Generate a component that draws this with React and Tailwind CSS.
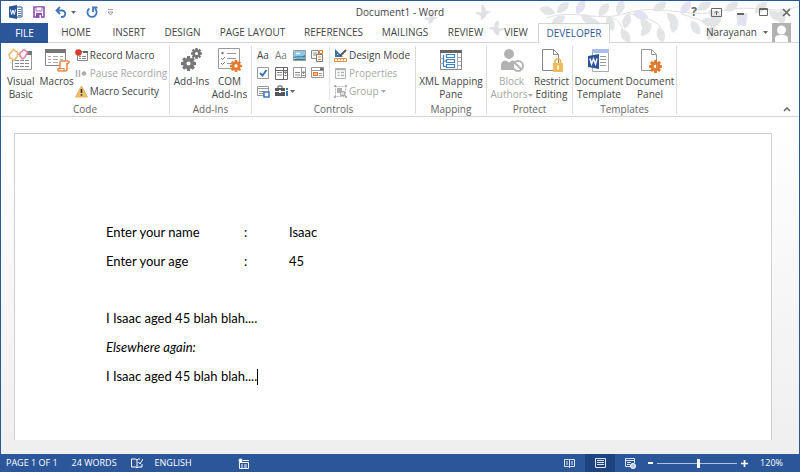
import React, { useState } from "react";

const Svg = ({ w, h, children, className = "" }) => (
  <svg width={w} height={h} viewBox={`0 0 ${w} ${h}`} fill="none" className={`shrink-0 ${className}`} aria-hidden="true">
    {children}
  </svg>
);

const Caret = ({ color = "#666" }) => (
  <Svg w={5} h={3} className="inline-block align-middle">
    <path d="M0 0h5L2.5 3z" fill={color} />
  </Svg>
);

const toothAngles = [0, 45, 90, 135, 180, 225, 270, 315];

const Gear = ({ x = 0, y = 0, size, color }) => (
  <g transform={`translate(${x} ${y}) scale(${size / 20})`}>
    <circle cx="10" cy="10" r="5" stroke={color} strokeWidth="4.4" />
    {toothAngles.map((angle) => (
      <path key={angle} d="M8 0h4l.6 4H7.400z" fill={color} transform={`rotate(${angle} 10 10)`} />
    ))}
  </g>
);

/* title bar icons */
const WordLogo = () => (
  <Svg w={14} h={14}>
    <path d="M8 2h5v10H8" stroke="#2b579a" fill="#fff" />
    <path d="M9 4.5h3M9 6.5h3M9 8.5h3M9 10.5h3" stroke="#2b579a" strokeWidth=".8" />
    <path d="M0 1.500 8 0v14l-8-1.500z" fill="#2b579a" />
    <path d="m1.500 4.500 1.200 5L4 5l1.300 4.500 1.200-5" stroke="#fff" />
  </Svg>
);

const SaveIcon = () => (
  <Svg w={12} h={12}>
    <path d="M1 1h10v10H1z" stroke="#8a4fb0" strokeWidth="1.6" />
    <path d="M3 1h6v4H3z" fill="#fff" stroke="#8a4fb0" strokeWidth=".8" />
    <path d="M3 7h6v5H3z" fill="#8a4fb0" />
    <path d="M6.500 9H8v3H6.500z" fill="#fff" />
  </Svg>
);

const UndoIcon = () => (
  <Svg w={12} h={12}>
    <path d="M1.500 4.500H7a3.200 3.200 0 0 1 0 6.500H6M5 1 1.500 4.500 5 8" stroke="#3f78bd" strokeWidth="1.8" />
  </Svg>
);

const RedoIcon = () => (
  <Svg w={12} h={12}>
    <path d="M3.500 2.500a4.600 4.600 0 1 0 5.500.3M7 6V1.500h4.500" stroke="#3f78bd" strokeWidth="1.8" />
  </Svg>
);

/* birds and leafy twigs behind the window title */
const Bird = ({ x, y, s = 1, flip = 1 }) => (
  <path
    d="M0 11c2-2 4-2 6-1l2-1C7 6 7 3 8 0c3 2 5 5 5 8l7 1-6 3c-1 3-3 5-7 7 0-2 0-4-1-6-2 0-4-1-6-2z"
    transform={`translate(${x} ${y}) scale(${s * flip} ${s})`}
    fill="#e0e1e4"
  />
);

const leaves = [
  [14, 12, 200], [16, 12, -40], [24, 15, 150], [36, 13, -60], [40, 14, 35], [50, 17, 60], [58, 15, -50],
  [66, 15, 70], [77, 14, -70], [88, 12, 110], [92, 12, 20], [100, 17, 60], [110, 22, 130], [118, 26, 80],
  [112, 10, -30], [126, 12, 50], [134, 16, 100], [140, 13, -50], [150, 20, 60], [156, 9, -25],
  [168, 9, 50], [178, 11, 110], [184, 10, -30], [196, 12, 60], [206, 12, 130], [214, 12, -40], [228, 10, 40],
  [240, 8, 90], [80, 28, 60], [172, 24, 110], [160, 20, 10],
];

const TitleArt = () => (
  <Svg w={380} h={41} className="absolute right-0 top-0">
    <Bird x={56} y={3} s={0.85} />
    <Bird x={86} y={19} s={0.85} flip={-1} />
    <Bird x={5} y={10} s={0.7} />
    <g transform="translate(122 0)">
      <path d="M5 17C35 7 55 22 86 12s62 6 94-2 54 5 78-5M88 12c16 7 22 4 32 14M60 15c14 0 20 6 22 15M140 13c18 5 24 8 32 12" stroke="#dedfe2" />
      {leaves.map(([x, y, r], i) => (
        <path
          key={i}
          d="M0 0C4-6 11-6 16-1 12 5 5 5 0 0z"
          fill={i % 7 === 3 ? "#e2e2f2" : "#e3e4e6"}
          transform={`translate(${x} ${y}) rotate(${r})`}
        />
      ))}
    </g>
  </Svg>
);

/* ribbon icons */
const VisualBasicIcon = () => (
  <Svg w={26} h={24}>
    <path d="M4.500 6.500h19v15h-19z" fill="#fff" stroke="#999" />
    <path d="M16 3h8v4h-8z" fill="#777" />
    <path d="M7 12.500h14M7 15.500h14M7 18.500h14" stroke="#888" strokeDasharray="4 1" />
    <path d="M1 6.500 5.500 1.500 10 4.500 9 9l-3 3-4-2z" fill="#fff" stroke="#ebbd68" strokeWidth="1.6" />
    <path d="m12 5 4-3.500 3.500 3L17 9l-2.500 2-2.500-3z" fill="#fff" stroke="#e386a3" strokeWidth="1.6" />
  </Svg>
);

const MacrosIcon = () => (
  <Svg w={26} h={24}>
    <path d="M1.500 1.500h20v16h-20z" fill="#fff" stroke="#888" />
    <path d="M1 1h21v4H1z" fill="#777" />
    <path d="M4 8.500h3m2 0h5m2 0h3M4 11.500h3m2 0h5m2 0h3M4 14.500h3m2 0h5" stroke="#aaa" />
    <path d="M17.500 13h6.500c1.500 0 1.500 2 0 2.500h-1V21c0 1-1 2-2 2h-6c-1.500 0-1.500-2.500 0-2.500h1v-6c0-1 .5-1.500 1.500-1.500z" fill="#fff" stroke="#ea8a4c" strokeWidth="1.600" />
    <path d="M15.500 20.500h4.500V23" stroke="#ea8a4c" strokeWidth="1.2" />
  </Svg>
);

const RecordIcon = () => (
  <Svg w={13} h={13}>
    <path d="M2.500 2.500h10v9h-10z" fill="#fff" stroke="#888" />
    <path d="M8 2h5v2H8z" fill="#666" />
    <path d="M4 7.500h2m1 0h4M4 9.500h2m1 0h4" stroke="#888" />
    <circle cx="3.500" cy="3.500" r="3.300" fill="#d5402b" />
  </Svg>
);

const PauseIcon = () => (
  <Svg w={13} h={13}>
    <path d="M1.500 3v7M4.500 3v7" stroke="#b0b0b0" strokeWidth="1.500" />
    <circle cx="9" cy="6.500" r="2.300" fill="#aaa" />
  </Svg>
);

const WarningIcon = () => (
  <Svg w={13} h={13}>
    <path d="M6.500 1 12.500 12H.5z" fill="#efc06c" stroke="#e5b35c" strokeLinejoin="round" />
    <path d="M6.500 4v4M6.500 9.300v1.500" stroke="#333" strokeWidth="1.600" />
  </Svg>
);

const AddInsIcon = () => (
  <Svg w={24} h={24}>
    <Gear x={1} y={8} size={15} color="#777" />
    <Gear x={11} y={0} size={11} color="#777" />
  </Svg>
);

const ComAddInsIcon = () => (
  <Svg w={26} h={24}>
    <path d="M1.500.5h21v20h-21z" fill="#fff" stroke="#999" />
    <path d="M10 5.500h9M10 10.500h9M10 15.500h5" stroke="#999" />
    <circle cx="5.500" cy="5" r="1.200" fill="#777" />
    <path d="m4 10 1.500 1.500L8 9M4 15l1.500 1.500L8 14" stroke="#777" />
    <Gear x={13} y={12} size={12} color="#e57a2e" />
  </Svg>
);

const PictureControl = () => (
  <Svg w={13} h={13}>
    <path d="M.5 1.500h12v10H.5z" fill="#8ec8e8" stroke="#999" />
    <path d="M1 8c4-2 7 1 11-2v5H1z" fill="#2f7f93" />
    <path d="M1 9.500c4-1 7 0 11-.5" stroke="#cfe6ee" />
    <path d="M3 4.500h4" stroke="#fff" strokeWidth="1.500" />
  </Svg>
);

const BlocksControl = () => (
  <Svg w={13} h={13}>
    <path d="M.5 1.500h7v8h-7zM2 4h4M2 6h4" stroke="#888" />
    <path d="M5.500 5.500h6v7h-6z" fill="#fff" stroke="#777" />
    <path d="M7 8h3M7 10.500h3" stroke="#e57a2e" />
    <path d="M8.500 1.500h3v3h-3z" fill="#fff" stroke="#e57a2e" />
  </Svg>
);

const CheckControl = () => (
  <Svg w={13} h={13}>
    <path d="M.5.5h11v11H.5z" fill="#fff" stroke="#999" />
    <path d="m3 6 2.500 2.500L9.500 3" stroke="#2e70b8" strokeWidth="1.800" />
  </Svg>
);

const ComboControl = ({ dark = false }) => (
  <Svg w={13} h={13}>
    <path d={dark ? "M.5.5h12v12H.5zM8.500 1v11M1 3.500h11" : "M.5.5h12v10H.5zM8.500 1v9"} fill="#fff" stroke={dark ? "#666" : "#999"} />
    <path d="M2 5.500h5M2 8h5" stroke="#888" />
    <path d="M9.500 5h2l-1 1.500zM9.500 8.500h2" stroke="#666" />
  </Svg>
);

const DateControl = () => (
  <Svg w={13} h={13}>
    <path d="M.5.5h12v10H.5zM1 3.500h11" fill="#fff" stroke="#999" />
    <path d="M9 .5h3.500v3H9z" fill="#777" />
    <path d="M2 5h5v4H2z" fill="#e57a2e" />
    <path d="M3 7h3" stroke="#fff" />
    <path d="M8 6.500h3M8 8.500h3" stroke="#999" />
  </Svg>
);

const RepeatControl = () => (
  <Svg w={13} h={13}>
    <path d="M.5 1.500h11v9H.5z" fill="#fff" stroke="#999" />
    <path d="M1 3.500h10M2 6.500h5M2 8.500h5" stroke="#999" />
    <path d="M7 7h5v5H7z" fill="#fff" stroke="#3979bf" strokeWidth="1.500" />
  </Svg>
);

const LegacyControl = () => (
  <Svg w={13} h={13}>
    <path d="M3 3V1h4v2" stroke="#555" />
    <path d="M0 3h10v3H0zM0 7h10v4H0z" fill="#555" />
    <path d="M4 5h2v3H4z" fill="#fff" />
    <path d="M12 3v2M12 6v5" stroke="#3979bf" strokeWidth="2" />
  </Svg>
);

const DesignIcon = () => (
  <Svg w={13} h={13}>
    <path d="M1 0v8h8z" fill="#3573b4" />
    <path d="M3 4.500V6h1.500z" fill="#fff" />
    <path d="m12 1-6 6" stroke="#555" strokeWidth="2" />
    <path d="M.5 9.500h12v3H.5z" fill="#fff" stroke="#e58b45" />
    <path d="M3.500 10v1.500M6.500 10v1.500M9.500 10v1.500" stroke="#e58b45" />
  </Svg>
);

const PropertiesIcon = () => (
  <Svg w={13} h={13}>
    <path d="M1.500 1.500h10v10h-10z" stroke="#b0b0b0" />
    <path d="M3.500 5.500h2M3.500 8.500h2M7 5.500h3M7 8.500h3M2 2.500h9" stroke="#b0b0b0" strokeWidth="1.300" />
  </Svg>
);

const GroupIcon = () => (
  <Svg w={13} h={13}>
    <path d="M1.500 1.500h10v10h-10z" stroke="#b5b5b5" strokeDasharray="2 1" />
    <path d="M3 3h5v5H3z" fill="#b0b0b0" />
    <path d="M6.500 6.500h4v4h-4z" fill="#ddd" stroke="#aaa" />
    <path d="M0 0h2v2H0zM11 0h2v2h-2zM0 11h2v2H0zM11 11h2v2h-2z" fill="#b0b0b0" />
  </Svg>
);

const XmlIcon = () => (
  <Svg w={24} h={24}>
    <path d="M1.500 2.500h21v19h-21z" fill="#fff" stroke="#888" />
    <path d="M1 2h22v3H1z" fill="#666" />
    <path d="M18.500 5v16M1 10.500h3M1 15.500h3M19 9.500h3M19 13.500h3M19 17.500h3" stroke="#aaa" />
    <path d="M4.500 7v11.500H8M4.500 13H8M7.500 6.500h8v3h-8zM7.500 11.500h8v3h-8zM7.500 16.500h8v3h-8z" stroke="#3d82c4" strokeWidth="1.200" />
  </Svg>
);

const BlockIcon = () => (
  <Svg w={24} h={25}>
    <circle cx="9" cy="6" r="5" fill="#b2b2b2" />
    <path d="M1 22v-5c0-3 2-4.500 5-4.500l3 2 3-2c3 0 5 1.500 5 4.500v5z" fill="#b2b2b2" />
    <circle cx="18" cy="18" r="5" fill="#fff" stroke="#b2b2b2" strokeWidth="2" />
    <path d="m14.500 14.500 7 7" stroke="#b2b2b2" strokeWidth="2" />
  </Svg>
);

const RestrictIcon = () => (
  <Svg w={24} h={25}>
    <path d="M2.500 1.500h11l5 5v16h-16zM13.500 1.500v5h5" fill="#fff" stroke="#888" />
    <path d="M15 15v-2a2.800 2.800 0 0 1 5.500 0v2" stroke="#e6b552" strokeWidth="1.700" />
    <path d="M13 15h10v9H13z" fill="#ecbd5c" />
    <path d="M18 17.500v4" stroke="#fff" strokeWidth="1.500" />
  </Svg>
);

const TemplateIcon = () => (
  <Svg w={24} h={25}>
    <path d="M5.500 1.500h16v22h-16z" fill="#fff" stroke="#aaa" />
    <path d="M5 1h17v4H5z" fill="#a8bfeb" />
    <path d="M13 8.500h6M13 11.500h6M13 14.500h6M13 17.500h6" stroke="#999" />
    <path d="m1 8 11-2v15L1 19z" fill="#2b579a" />
    <path d="m3 10.500 1.500 5.500 2-5 2 5 1.500-5.500" stroke="#fff" strokeWidth="1.500" />
  </Svg>
);

const PanelIcon = () => (
  <Svg w={24} h={25}>
    <path d="M3.500 1.500h10l5 5v16h-15zM13.500 1.500v5h5" fill="#fff" stroke="#999" />
    <Gear x={11} y={12} size={13} color="#e57a2e" />
  </Svg>
);

const BigButton = ({ icon, children, disabled, caret, className = "" }) => (
  <button
    type="button"
    disabled={disabled}
    className={`flex shrink-0 flex-col items-center whitespace-nowrap text-center leading-[13px] disabled:text-[#a6a6a6] ${className}`}
  >
    <span className="mb-px flex h-7 items-center">{icon}</span>
    <span>
      {children}
      {caret && <Caret color="#aaa" />}
    </span>
  </button>
);

const SmallButton = ({ icon, label, disabled, caret }) => (
  <button type="button" disabled={disabled} className="flex h-[18px] items-center gap-0.5 whitespace-nowrap disabled:text-[#a6a6a6]">
    {icon}
    {label}
    {caret && <Caret color="#aaa" />}
  </button>
);

const Group = ({ label, children, className }) => (
  <section aria-label={label} className={`mb-0.5 mt-[3px] flex shrink-0 flex-col border-r border-[#dcdcdc] ${className}`}>
    <div className="flex h-[58px] items-start justify-center">{children}</div>
    <h2 className="text-center leading-[10px] text-[#666]">{label}</h2>
  </section>
);

const tabs = [
  ["HOME", "w-14"],
  ["INSERT", "w-[50px]"],
  ["DESIGN", "w-[57px]"],
  ["PAGE LAYOUT", "w-[83px]"],
  ["REFERENCES", "w-[79px]"],
  ["MAILINGS", "w-[64px]"],
  ["REVIEW", "w-[57px]"],
  ["VIEW", "w-[44px]"],
  ["DEVELOPER", "w-[72px]"],
];

const controls = [
  ["Rich text", <span className="text-[10px]">Aa</span>],
  ["Plain text", <span className="text-[10px] text-[#777]">Aa</span>],
  ["Picture", <PictureControl />],
  ["Building block gallery", <BlocksControl />],
  ["Check box", <CheckControl />],
  ["Combo box", <ComboControl dark />],
  ["Drop-down list", <ComboControl />],
  ["Date picker", <DateControl />],
  ["Repeating section", <RepeatControl />],
  ["Legacy tools", <><LegacyControl /><Caret /></>],
];

function TitleBar() {
  return (
    <header className="flex h-[22px] items-center text-[10px]">
      <div className="flex flex-1 items-center pl-2">
        <WordLogo />
        <button type="button" aria-label="Save" className="ml-2.5"><SaveIcon /></button>
        <button type="button" aria-label="Undo" className="ml-2.5 flex items-center gap-1"><UndoIcon /><Caret /></button>
        <button type="button" aria-label="Repeat" className="ml-2.5"><RedoIcon /></button>
        <button type="button" aria-label="Customize toolbar" className="ml-2.5">
          <Svg w={5} h={6}><path d="M0 .5h5M0 3h5L2.500 6z" stroke="#777" strokeWidth=".7" /></Svg>
        </button>
      </div>
      <h1 className="relative">Document1 - Word</h1>
      <div className="relative flex flex-1 items-center justify-end gap-3.5 pr-2">
        <button type="button" aria-label="Help" className="text-[12px] font-bold text-[#666]">?</button>
        <button type="button" aria-label="Ribbon display options">
          <Svg w={11} h={9}><path d="M.5.5h10v8H.5zM5.500 7V3M3.500 5l2-2 2 2" stroke="#666" /></Svg>
        </button>
        <button type="button" aria-label="Minimize"><Svg w={9} h={9}><path d="M1 6h7" stroke="#666" strokeWidth="2" /></Svg></button>
        <button type="button" aria-label="Maximize"><Svg w={9} h={9}><path d="M.5.5h8v7h-8zM0 1.500h9" stroke="#666" /></Svg></button>
        <button type="button" aria-label="Close"><Svg w={9} h={9}><path d="m1 1 7 7M8 1 1 8" stroke="#666" strokeWidth="1.700" /></Svg></button>
      </div>
    </header>
  );
}

function TabStrip() {
  const [active, setActive] = useState("DEVELOPER");
  return (
    <nav className="relative flex h-5 items-stretch border-b border-[#d4d4d4] text-[10px]">
      <button type="button" className="-mb-px w-[47px] bg-[#2b579a] text-white">FILE</button>
      {tabs.map(([name, width]) => (
        <button
          key={name}
          type="button"
          onClick={() => setActive(name)}
          className={`whitespace-nowrap ${width} ${active === name ? "-mb-px border border-b-0 border-[#d4d4d4] bg-white text-[#2b579a]" : ""}`}
        >
          {name}
        </button>
      ))}
      <div className="ml-auto flex items-center pr-2">
        <button type="button" className="flex items-center gap-1.5">Narayanan <Caret /></button>
        <Svg w={19} h={19} className="ml-1">
          <path d="M0 0h19v19H0z" fill="#b2b2b2" />
          <circle cx="9.500" cy="7" r="4.500" fill="#fff" />
          <path d="M3 19v-3c0-3 2-4 5-4h3c3 0 5 1 5 4v3z" fill="#fff" />
        </Svg>
      </div>
    </nav>
  );
}

function Ribbon() {
  return (
    <div className="flex h-[74px] border-b border-[#d4d4d4] bg-white text-[10px]">
      <Group label="Code" className="w-[169px]">
        <BigButton icon={<VisualBasicIcon />} className="w-9">Visual<br />Basic</BigButton>
        <BigButton icon={<MacrosIcon />} className="w-9">Macros</BigButton>
        <div className="flex flex-col">
          <SmallButton icon={<RecordIcon />} label="Record Macro" />
          <SmallButton icon={<PauseIcon />} label="Pause Recording" disabled />
          <SmallButton icon={<WarningIcon />} label="Macro Security" />
        </div>
      </Group>
      <Group label="Add-Ins" className="w-[82px]">
        <BigButton icon={<AddInsIcon />} className="w-[38px]">Add-Ins</BigButton>
        <BigButton icon={<ComAddInsIcon />} className="w-[38px]">COM<br />Add-Ins</BigButton>
      </Group>
      <Group label="Controls" className="w-[164px]">
        <div className="grid shrink-0 grid-cols-4 gap-x-1">
          {controls.map(([name, icon]) => (
            <button key={name} type="button" aria-label={name} className="flex h-[18px] w-[14px] items-center gap-0.5">
              {icon}
            </button>
          ))}
        </div>
        <div className="ml-1 flex flex-col border-l border-[#e4e4e4] pl-1">
          <SmallButton icon={<DesignIcon />} label="Design Mode" />
          <SmallButton icon={<PropertiesIcon />} label="Properties" disabled />
          <SmallButton icon={<GroupIcon />} label="Group" disabled caret />
        </div>
      </Group>
      <Group label="Mapping" className="w-[71px]">
        <BigButton icon={<XmlIcon />}>XML Mapping<br />Pane</BigButton>
      </Group>
      <Group label="Protect" className="w-[86px]">
        <BigButton icon={<BlockIcon />} className="w-[44px]" disabled caret>Block<br />Authors</BigButton>
        <BigButton icon={<RestrictIcon />} className="w-9">Restrict<br />Editing</BigButton>
      </Group>
      <Group label="Templates" className="w-[104px]">
        <BigButton icon={<TemplateIcon />} className="w-[51px]">Document<br />Template</BigButton>
        <BigButton icon={<PanelIcon />} className="w-[51px]">Document<br />Panel</BigButton>
      </Group>
      <button type="button" aria-label="Collapse the ribbon" className="mb-1 ml-auto mr-2 self-end">
        <Svg w={8} h={5}><path d="m1 4 3-3 3 3" stroke="#666" strokeWidth="1.500" /></Svg>
      </button>
    </div>
  );
}

function DocumentPage() {
  return (
    <main className="flex flex-1 bg-gradient-to-b from-white to-[#efefef] pb-[14px] pl-[13px] pr-[27px] pt-4">
      <article className="flex-1 border border-b-0 border-[#d0d0d0] bg-white px-[91px] pt-[84px] font-['Lato',sans-serif] text-[13px] leading-[29px] text-black">
        <div className="grid grid-cols-[138px_45px_1fr]">
          <p>Enter your name</p><p>:</p><p>Isaac</p>
          <p>Enter your age</p><p>:</p><p>45</p>
        </div>
        <p className="mt-7">I Isaac aged 45 blah blah....</p>
        <p className="italic">Elsewhere again:</p>
        <p className="flex items-center">I Isaac aged 45 blah blah....<span className="h-4 w-px bg-black" /></p>
      </article>
    </main>
  );
}

function StatusBar() {
  const [zoom, setZoom] = useState(120);
  return (
    <footer className="flex h-[18px] items-center bg-[#2b579a] pl-[5px] pr-4 text-[9px] text-white">
      <span>PAGE 1 OF 1</span>
      <span className="ml-3.5">24 WORDS</span>
      <button type="button" aria-label="Proofing" className="ml-3.5">
        <Svg w={12} h={11}><path d="M6 2v8M6 2 5 1H.5v8H5l1 1 1-1h4V6M6 2l1-1h2M7.500 4l1.500 2 3-5" stroke="#fff" /></Svg>
      </button>
      <span className="ml-3">ENGLISH</span>
      <button type="button" aria-label="Record macro" className="ml-[46px]">
        <Svg w={11} h={11}><path d="M1.500 4.500h9v6h-9zM5 2.500h6M3 7h2m1 0h3M3 9h2m1 0h3" stroke="#fff" /><circle cx="2.500" cy="2.500" r="2" fill="#fff" /></Svg>
      </button>
      <div className="ml-auto flex h-full items-center">
        <button type="button" aria-label="Read mode" className="mr-2.5">
          <Svg w={11} h={10}><path d="M5.500 1v9M.5 1.500h4l1 1 1-1h4v7h-4l-1 1-1-1h-4zM2 4h2M2 6h2M7 4h2M7 6h2" stroke="#dbe4f2" /></Svg>
        </button>
        <button type="button" aria-label="Print layout" className="flex h-full w-[30px] items-center justify-center bg-[#1e4480]">
          <Svg w={11} h={10}><path d="M.5.5h10v9H.5zM2 2.500h7M2 4.500h7M2 6.500h7" stroke="#dbe4f2" /></Svg>
        </button>
        <button type="button" aria-label="Web layout" className="ml-2.5">
          <Svg w={11} h={11}><path d="M5 8.500H.5v-8h9V5M1 2.500h8M2 4.500h4M2 6.500h3" stroke="#dbe4f2" /><circle cx="8" cy="8" r="2.500" fill="#b9c9e2" stroke="#fff" /></Svg>
        </button>
        <button type="button" aria-label="Zoom out" className="ml-3"><Svg w={5} h={6}><path d="M0 3h5" stroke="#fff" strokeWidth="2" /></Svg></button>
        <input
          type="range"
          aria-label="Zoom"
          min="10"
          max="220"
          value={zoom}
          onChange={(e) => setZoom(Number(e.target.value))}
          className="mx-1 h-3 w-20 appearance-none bg-transparent [&::-webkit-slider-runnable-track]:h-px [&::-webkit-slider-runnable-track]:bg-[#aebfdc] [&::-webkit-slider-thumb]:-mt-1 [&::-webkit-slider-thumb]:h-[9px] [&::-webkit-slider-thumb]:w-[3px] [&::-webkit-slider-thumb]:appearance-none [&::-webkit-slider-thumb]:bg-white"
        />
        <button type="button" aria-label="Zoom in"><Svg w={7} h={7}><path d="M0 3.500h7M3.500 0v7" stroke="#fff" strokeWidth="1.700" /></Svg></button>
        <span className="ml-3">{zoom}%</span>
      </div>
    </footer>
  );
}

export default function App() {
  return (
    <div className="relative flex min-h-screen flex-col border border-b-0 border-[#2b579a] bg-white font-['Open_Sans',sans-serif] text-[#444]">
      <TitleArt />
      <TitleBar />
      <TabStrip />
      <Ribbon />
      <DocumentPage />
      <StatusBar />
    </div>
  );
}
